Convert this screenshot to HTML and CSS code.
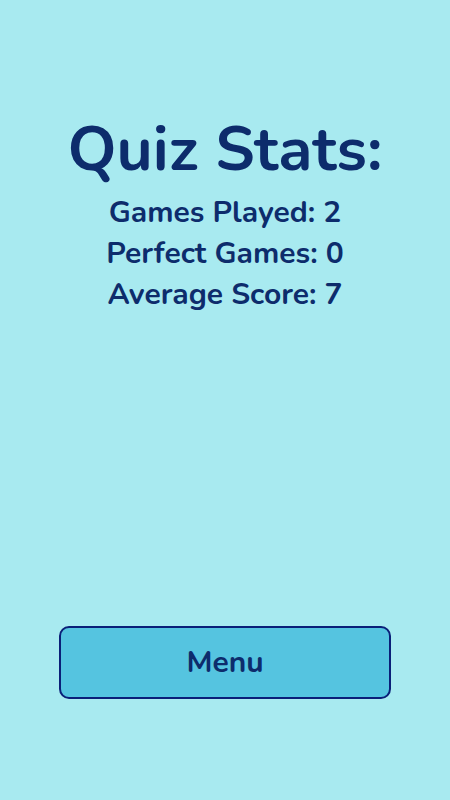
FILE: index.html
```html
<!DOCTYPE html>
<html>
<head>
<meta charset="utf-8">
<link rel="stylesheet" href="styles.css">
</head>
<body>
<main class="screen">
  <section class="stats">
    <h1 class="title">Quiz Stats:</h1>
    <p class="line">Games Played: 2</p>
    <p class="line">Perfect Games: 0</p>
    <p class="line">Average Score: 7</p>
  </section>
  <button class="menu-btn">Menu</button>
</main>
</body>
</html>
```
FILE: styles.css
```css
html, body {
  margin: 0;
  padding: 0;
}
body {
  background: #a8eaf0;
  font-family: "Nunito", "Lato", "Noto Sans", sans-serif;
  color: #0d2c6c;
}
.screen {
  height: 800px;
  box-sizing: border-box;
  display: flex;
  flex-direction: column;
  align-items: center;
  padding-top: 112px;
}
.stats {
  display: flex;
  flex-direction: column;
  align-items: center;
}
.title {
  margin: 0 0 4px;
  font-size: 62.5px;
  font-weight: 700;
  line-height: 76px;
}
.line {
  margin: 0;
  font-size: 30px;
  font-weight: 700;
  line-height: 41px;
}
.menu-btn {
  margin-top: auto;
  margin-bottom: 101px;
  width: 332px;
  height: 73px;
  background: #55c4e0;
  border: 2px solid #0a1f78;
  border-radius: 10px;
  font-family: inherit;
  font-size: 30px;
  font-weight: 700;
  color: #0d2c6c;
}
```
